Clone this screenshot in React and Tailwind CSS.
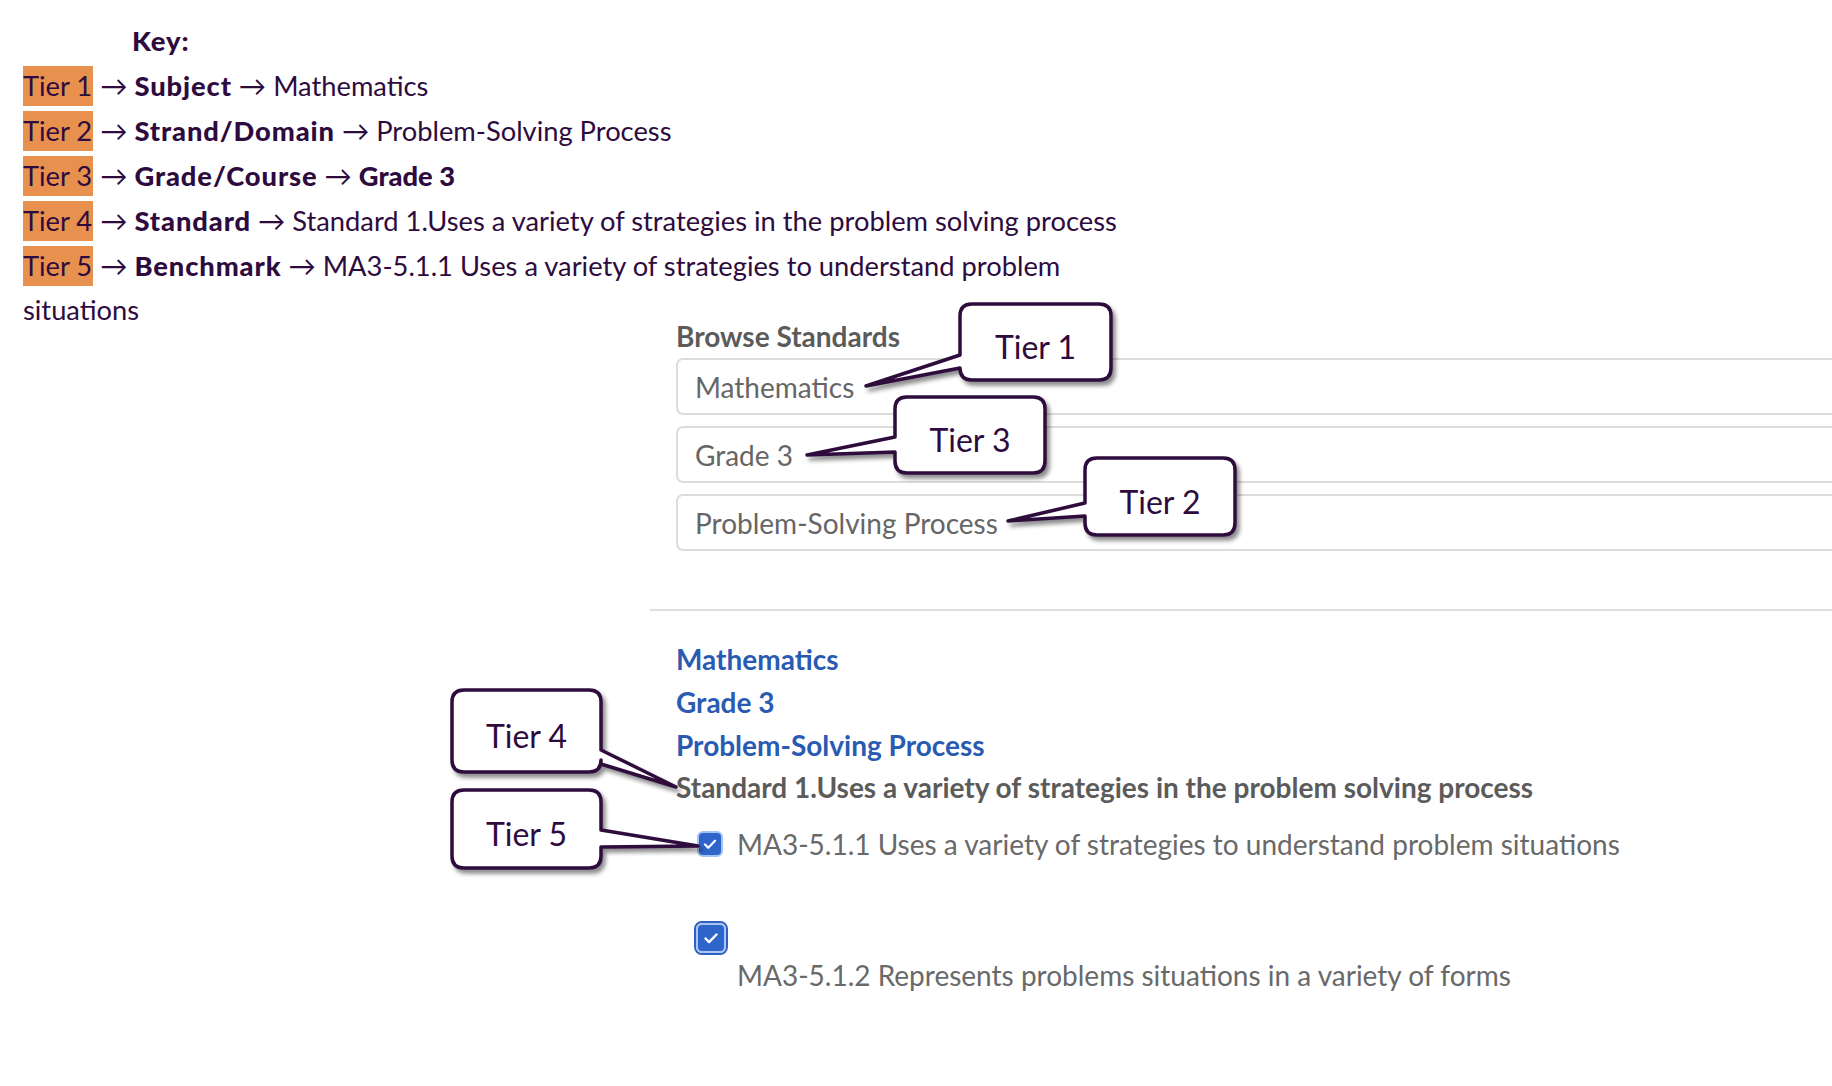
import React from 'react';

const INK = '#2e0b3e';

const keyRows = [
  { tier: 'Tier 1', label: 'Subject', value: 'Mathematics' },
  { tier: 'Tier 2', label: 'Strand/Domain', value: 'Problem-Solving Process' },
  { tier: 'Tier 3', label: 'Grade/Course', value: 'Grade 3', boldValue: true },
  { tier: 'Tier 4', label: 'Standard', value: 'Standard 1.Uses a variety of strategies in the problem solving process' },
  { tier: 'Tier 5', label: 'Benchmark', value: 'MA3-5.1.1 Uses a variety of strategies to understand problem situations' },
];

const callouts = [
  { label: 'Tier 1', x: 960, y: 304, w: 151, h: 76, side: 'left', a1: 355, a2: 368, tip: [866, 386] },
  { label: 'Tier 3', x: 895, y: 397, w: 150, h: 76, side: 'left', a1: 437, a2: 452, tip: [807, 455] },
  { label: 'Tier 2', x: 1085, y: 458, w: 150, h: 77, side: 'left', a1: 503, a2: 516, tip: [1008, 521] },
  { label: 'Tier 4', x: 452, y: 690, w: 149, h: 82, side: 'right', a1: 750, a2: 764, tip: [676, 787] },
  { label: 'Tier 5', x: 452, y: 790, w: 149, h: 78, side: 'right', a1: 830, a2: 847, tip: [698, 846] },
];

// rounded box with a wedge tail on one side
function calloutPath({ x, y, w, h, side, a1, a2, tip }) {
  const r = 12;
  const [tx, ty] = tip;
  const R = x + w;
  const B = y + h;
  if (side === 'left') {
    return `M${x + r} ${y} H${R - r} Q${R} ${y} ${R} ${y + r} V${B - r} Q${R} ${B} ${R - r} ${B} H${x + r} Q${x} ${B} ${x} ${B - r} V${a2} L${tx} ${ty} L${x} ${a1} V${y + r} Q${x} ${y} ${x + r} ${y} Z`;
  }
  return `M${x + r} ${y} H${R - r} Q${R} ${y} ${R} ${y + r} V${a1} L${tx} ${ty} L${R} ${a2} V${B - r} Q${R} ${B} ${R - r} ${B} H${x + r} Q${x} ${B} ${x} ${B - r} V${y + r} Q${x} ${y} ${x + r} ${y} Z`;
}

const Check = () => (
  <svg viewBox="0 0 24 24" className="w-full h-full">
    <path d="M6.5 12.5l3.6 3.6L17.5 8.5" fill="none" stroke="#fff" strokeWidth="2.4" strokeLinecap="round" strokeLinejoin="round" />
  </svg>
);

export default function App() {
  return (
    <div className="relative w-[1832px] h-[1086px] overflow-hidden bg-white font-['Lato',sans-serif]">
      {/* Key */}
      <div className="w-[1150px] pl-[23px] pt-[19px] text-[27.3px] text-[#2e0b3e]">
        <div className="leading-[44px] mb-[1px] pl-[109px] font-black tracking-[0.9px]">Key:</div>
        {keyRows.map(row => (
          <div key={row.tier} className="leading-[44px] mb-[1px]">
            <span className="inline-block leading-[40px] bg-[#e8914f] pr-[1px]">{row.tier}</span>
            {' → '}
            <span className="font-black tracking-[0.9px]">{row.label}</span>
            {' → '}
            <span className={row.boldValue ? 'font-black' : ''}>{row.value}</span>
          </div>
        ))}
      </div>

      {/* Browse Standards */}
      <div className="ml-[650px] -mt-[13px]">
        <div className="pl-[26px]">
          <div className="text-[28px] leading-[32px] font-bold text-[#5b5b5b] mb-[6px]">Browse Standards</div>
          <div className="flex flex-col gap-[11px]">
            {['Mathematics', 'Grade 3', 'Problem-Solving Process'].map(v => (
              <div key={v} className="w-[1300px] h-[57px] flex items-center px-[17px] border-2 border-[#dcdcdc] rounded-[7px] text-[28px] text-[#666]">
                {v}
              </div>
            ))}
          </div>
        </div>

        <div className="mt-[58px] border-t-2 border-[#dedede]" />

        <div className="pl-[26px] pt-[27px]">
          <div className="text-[28px] leading-[43px] font-bold text-[#2a5bb2]">
            <div>Mathematics</div>
            <div>Grade 3</div>
            <div>Problem-Solving Process</div>
          </div>
          <div className="text-[28px] leading-[40px] font-bold text-[#5b5b5b]">
            Standard 1.Uses a variety of strategies in the problem solving process
          </div>

          <div className="mt-[17px] flex items-center leading-[40px] text-[28px] text-[#696969]">
            <div className="ml-[21px] mr-[14px] w-[26px] h-[26px] rounded-[6px] bg-[#2f65cb] border-2 border-[#a4c2f2]">
              <Check />
            </div>
            <span>MA3-5.1.1 Uses a variety of strategies to understand problem situations</span>
          </div>

          <div className="mt-[57px] ml-[18px] w-[34px] h-[34px] rounded-[8px] border-2 border-[#2f5fc2]">
            <div className="w-full h-full rounded-[6px] bg-[#2f65cb] border-2 border-[#a9c6f3] p-[1px]">
              <Check />
            </div>
          </div>
          <div className="pl-[61px] text-[28px] leading-[40px] text-[#696969]">
            MA3-5.1.2 Represents problems situations in a variety of forms
          </div>
        </div>
      </div>

      {/* Tier callouts */}
      <svg className="absolute inset-0 pointer-events-none" width="1832" height="1086">
        <defs>
          <filter id="callout-shadow" x="-20%" y="-20%" width="140%" height="150%">
            <feDropShadow dx="3" dy="4" stdDeviation="2" floodColor="#000" floodOpacity="0.45" />
          </filter>
        </defs>
        {callouts.map(c => (
          <g key={c.label}>
            <path d={calloutPath(c)} fill="#fff" stroke={INK} strokeWidth="3.5" strokeLinejoin="round" filter="url(#callout-shadow)" />
            <text x={c.x + c.w / 2} y={c.y + c.h / 2 + 17} textAnchor="middle" fontFamily="Lato, sans-serif" fontSize="32" fill={INK}>
              {c.label}
            </text>
          </g>
        ))}
      </svg>
    </div>
  );
}
